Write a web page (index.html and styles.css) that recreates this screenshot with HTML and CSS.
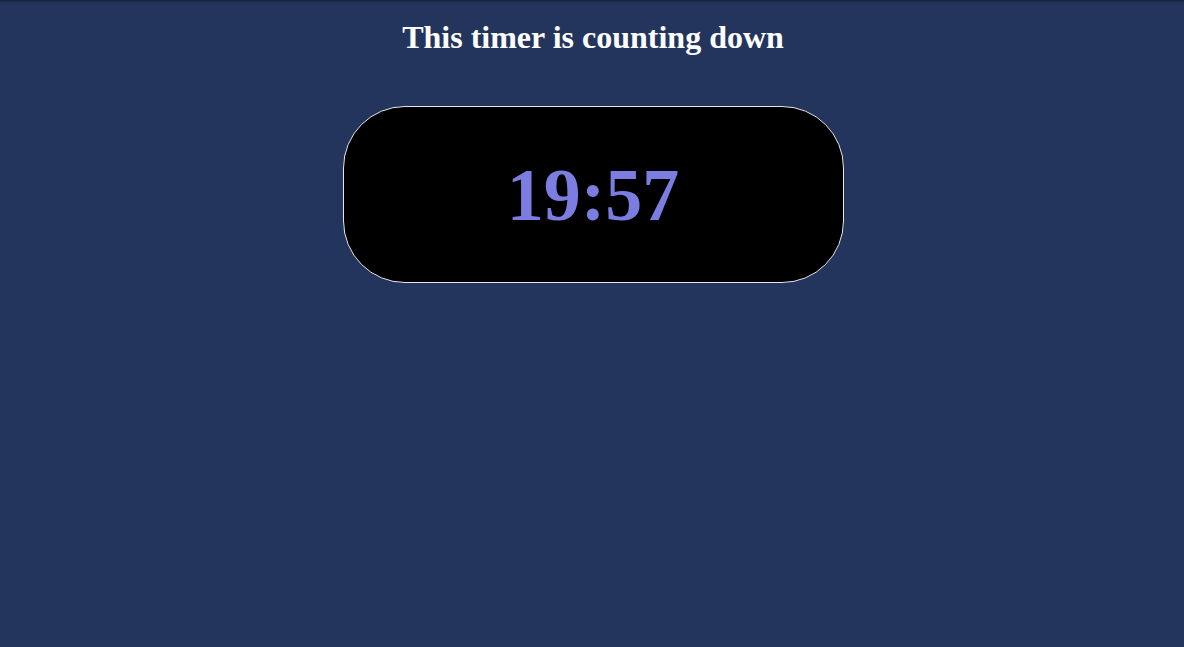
FILE: index.html
```html
<!DOCTYPE html>
<html>
<head>
<meta charset="utf-8">
<link rel="stylesheet" href="styles.css">
</head>
<body>
<div class="page">
  <h1 class="title">This timer is counting down</h1>
  <div class="timer"><span class="time">19:57</span></div>
</div>
</body>
</html>
```
FILE: styles.css
```css
html, body {
  margin: 0;
  padding: 0;
  height: 100%;
}
body {
  background: #23355d;
  font-family: "Liberation Serif", "Times New Roman", serif;
  box-shadow: inset 0 3px 3px -2px rgba(0, 0, 0, 0.45);
}
.page {
  display: flex;
  flex-direction: column;
  align-items: center;
  padding-top: 20px;
}
.title {
  margin: 0 0 0 2px;
  font-size: 32px;
  font-weight: bold;
  color: #ffffff;
  line-height: 35px;
}
.timer {
  box-sizing: border-box;
  margin-top: 51px;
  margin-left: 2px;
  width: 501px;
  height: 177px;
  border: 1px solid #e6e6e6;
  border-radius: 62px;
  background: #000;
  display: flex;
  align-items: center;
  justify-content: center;
}
.time {
  font-size: 74px;
  font-weight: bold;
  color: #7b7ee0;
  line-height: 1;
}
```
